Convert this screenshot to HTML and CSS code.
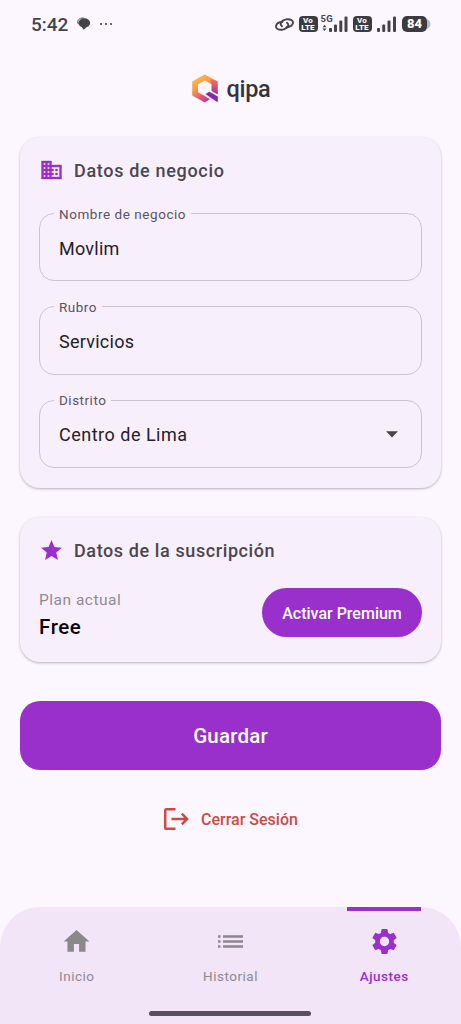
FILE: index.html
```html
<!DOCTYPE html>
<html lang="es">
<head>
<meta charset="utf-8">
<title>qipa</title>
<link rel="stylesheet" href="styles.css">
</head>
<body>
<div class="screen">
  <div class="status">
    <span class="clock">5:42</span>
    <svg class="chat" width="14" height="14" viewBox="0 0 14 14"><path d="M7 1.200C3.500.5.800 2.300.700 4.800c0 1 .3 1.600.7 2.200" fill="none" stroke="#45434a" stroke-width=".9"/><ellipse cx="7.300" cy="6" rx="5.900" ry="4.700" fill="#45434a"/><path d="M4.500 9.500l2.100 3.300 2.900-2.600z" fill="#45434a"/></svg>
    <svg class="dots" width="14" height="4" viewBox="0 0 14 4" fill="#45434a"><circle cx="2" cy="2" r="1.100"/><circle cx="7" cy="2" r="1.100"/><circle cx="12" cy="2" r="1.100"/></svg>
    <div class="indicators">
      <svg class="link" width="19" height="15" viewBox="0 0 19 15" fill="none" stroke="#45434a" stroke-width="1.900" stroke-linecap="round"><path d="M7 9.300C4.300 7.300 6 3.400 11 2.400C15.500 1.600 18.600 3.500 17.900 6.300C17.300 8.700 14.500 10 11.500 10.200"/><path d="M12 5.700C14.700 7.700 13 11.600 8 12.600C3.500 13.400.4 11.500 1.100 8.700C1.700 6.300 4.500 5 7.500 4.800"/></svg>
      <span class="volte"><span>Vo</span><span>LTE</span></span>
      <span class="mobile"><span class="gen">5G</span><svg width="26" height="16" viewBox="0 0 26 16" fill="#45434a"><path d="M2.500 8.800l2 2.400h-4zM2.500 15l-2-2.400h4z"/><rect x="7" y="12" width="3" height="4" rx="1"/><rect x="12" y="8.500" width="3" height="7.500" rx="1"/><rect x="17.300" y="4.500" width="3" height="11.500" rx="1"/><rect x="22.500" y="0.500" width="3" height="15.500" rx="1"/></svg></span>
      <span class="volte"><span>Vo</span><span>LTE</span></span>
      <svg class="bars" width="20" height="16" viewBox="0 0 20 16" fill="#45434a"><rect x="0" y="12" width="3" height="4" rx="1"/><rect x="5.200" y="8.500" width="3" height="7.500" rx="1"/><rect x="10.500" y="4.500" width="3" height="11.500" rx="1"/><rect x="16" y="0.500" width="3" height="15.500" rx="1"/></svg>
      <span class="battery">84</span><svg class="tip" width="4" height="10" viewBox="0 0 4 10"><path d="M0 0Q3.500 2 3.500 5T0 10z" fill="#bbb7bf"/></svg>
    </div>
  </div>

  <div class="brand">
    <svg width="28" height="30" viewBox="0 0 28 30">
      <defs>
        <linearGradient id="ring" x1=".1" y1="0" x2=".7" y2="1"><stop offset="0" stop-color="#ffc445"/><stop offset=".4" stop-color="#f79a4c"/><stop offset=".75" stop-color="#d9507c"/><stop offset="1" stop-color="#b02c98"/></linearGradient>
        <linearGradient id="side" x1="0" y1="0" x2="0" y2="1"><stop offset="0" stop-color="#f2784f"/><stop offset="1" stop-color="#a52fa0"/></linearGradient>
      </defs>
      <path fill="url(#ring)" d="M13.800.5L26.800 7.500L20.500 10.300L13.800 6.500L7 10.500V18.300L13 21.600L19 25.300L13.800 28.500L1.200 21.500V7.500z"/>
      <path fill="url(#side)" d="M20.500 10.300L19 5L26.800 7.500V20.500L20.500 17z"/>
      <path fill="#8526ae" d="M14.500 20L18.300 17.800L26.800 22.500V28.200L20 24z"/>
    </svg>
    <span class="brand-name">qipa</span>
  </div>

  <main class="content">
    <section class="card business">
      <h2 class="card-title"><svg width="25" height="24" viewBox="0 0 24 24" fill="#9930cb"><path d="M12 7V3H2v18h20V7H12zM6 19H4v-2h2v2zm0-4H4v-2h2v2zm0-4H4V9h2v2zm0-4H4V5h2v2zm4 12H8v-2h2v2zm0-4H8v-2h2v2zm0-4H8V9h2v2zm0-4H8V5h2v2zm10 12h-8v-2h2v-2h-2v-2h2v-2h-2V9h8v10zm-2-8h-2v2h2v-2zm0 4h-2v2h2v-2z" stroke="#9930cb" stroke-width=".4"/></svg><span class="t-business">Datos de negocio</span></h2>
      <fieldset class="field"><legend class="l-name">Nombre de negocio</legend><span class="v-name">Movlim</span></fieldset>
      <fieldset class="field"><legend class="l-line">Rubro</legend><span class="v-line">Servicios</span></fieldset>
      <fieldset class="field"><legend class="l-area">Distrito</legend><span class="v-area">Centro de Lima</span><svg width="12" height="7" viewBox="0 0 12 7"><path d="M0 .3h12L6 6.500z" fill="#49454f"/></svg></fieldset>
    </section>

    <section class="card plan">
      <h2 class="card-title"><svg width="25" height="25" viewBox="0 0 24 24" fill="#9930cb"><path d="M12 17.270L18.180 21l-1.640-7.030L22 9.240l-7.190-.61L12 2 9.190 8.630 2 9.240l5.460 4.730L5.820 21z"/></svg><span class="t-plan">Datos de la suscripción</span></h2>
      <div class="plan-row">
        <div class="plan-info"><span class="plan-label">Plan actual</span><strong class="plan-name">Free</strong></div>
        <button class="premium">Activar Premium</button>
      </div>
    </section>

    <button class="save">Guardar</button>
    <a class="logout"><svg width="26" height="24" viewBox="0 0 26 24" fill="none" stroke="#cb4a46" stroke-width="2.500"><path d="M12.500 2.200H3.500q-1.300 0-1.300 1.300v17q0 1.300 1.300 1.300h9M8.500 12h16M18.800 6.700l5.300 5.300-5.300 5.300"/></svg><span>Cerrar Sesión</span></a>
  </main>

  <nav class="nav">
    <a class="tab"><svg width="31" height="31" viewBox="0 0 24 24" fill="#8b888c"><path d="M10 20v-6h4v6h5v-8h3L12 3 2 12h3v8z"/></svg><span class="n-home">Inicio</span></a>
    <a class="tab"><svg width="31" height="31" viewBox="-.4 -.4 24.800 24.800" fill="#8b888c"><path d="M2 17h2v-2H2v2zm0-4h2v-2H2v2zm0-4h2V7H2v2zm4 4h16v-2H6v2zm0 4h16v-2H6v2zM6 7v2h16V7H6z"/></svg><span class="n-history">Historial</span></a>
    <a class="tab active"><svg width="31" height="31" viewBox="0 0 24 24" fill="#9930cb"><path d="M19.140 12.940c.04-.3.06-.61.06-.94 0-.32-.02-.64-.07-.94l2.030-1.580c.18-.14.23-.41.12-.61l-1.920-3.320c-.12-.22-.37-.29-.59-.22l-2.390.96c-.5-.38-1.030-.7-1.620-.94l-.36-2.540c-.04-.24-.24-.41-.48-.41h-3.840c-.24 0-.43.17-.47.41l-.36 2.540c-.59.24-1.130.57-1.620.94l-2.390-.96c-.22-.08-.47 0-.59.22L2.740 8.870c-.12.21-.08.47.12.61l2.030 1.580c-.05.3-.09.63-.09.94s.02.64.07.94l-2.030 1.580c-.18.14-.23.41-.12.61l1.920 3.320c.12.22.37.29.59.22l2.390-.96c.5.38 1.030.7 1.620.94l.36 2.540c.05.24.24.41.48.41h3.840c.24 0 .44-.17.47-.41l.36-2.540c.59-.24 1.130-.56 1.620-.94l2.390.96c.22.08.47 0 .59-.22l1.920-3.320c.12-.22.07-.47-.12-.61l-2.010-1.580zM12 15.600c-1.980 0-3.600-1.620-3.600-3.600s1.620-3.600 3.600-3.600 3.600 1.620 3.600 3.600-1.620 3.600-3.600 3.600z"/></svg><span class="n-settings">Ajustes</span></a>
    <span class="home-bar"></span>
  </nav>
</div>
</body>
</html>
```
FILE: styles.css
```css
* { box-sizing: border-box; }
body { margin: 0; font-family: Roboto, "Liberation Sans", sans-serif; color: #242029; }
.screen { width: 461px; height: 1024px; background: #fcf7ff; display: flex; flex-direction: column; overflow: hidden; }
h2, button { margin: 0; font: inherit; }
svg { display: block; flex: none; }

.status { height: 48px; display: flex; align-items: center; padding: 0 30px 0 31px; color: #45434a; }
.clock { font-size: 19px; font-weight: 500; width: 46px; }
.dots { margin-left: 8px; }
.indicators { margin-left: auto; display: flex; align-items: center; }
.link { margin-right: 5px; }
.volte { width: 19px; height: 16px; border-radius: 4px; background: #3d3b42; color: #fff; display: flex; flex-direction: column; align-items: center; justify-content: center; font-size: 8px; line-height: 7px; font-weight: 800; letter-spacing: .2px; }
.mobile { position: relative; margin: 0 5px 0 4px; }
.gen { position: absolute; left: -1px; top: -2px; font-size: 9.500px; line-height: 9px; font-weight: 700; letter-spacing: .2px; }
.bars { margin: 0 5px 0 5.500px; }
.battery { width: 25px; height: 16px; border-radius: 5px; background: #3d3b42; color: #fff; font-size: 13px; line-height: 16px; font-weight: 800; text-align: center; }

.brand { height: 89px; padding-top: 26px; display: flex; justify-content: center; gap: 8px; }
.brand-name { font-size: 23.500px; line-height: 31px; font-weight: 500; color: #38333a; letter-spacing: -.3px; }

.content { flex: 1; padding: 0 20px; display: flex; flex-direction: column; }
.card { background: #f7effc; border-radius: 20px; padding: 20px 19px; box-shadow: 0 1px 3px rgba(40, 20, 50, .2), 0 1px 2px rgba(40, 20, 50, .12); }
.business { height: 351px; display: flex; flex-direction: column; }
.card-title { display: flex; align-items: center; gap: 10px; height: 27px; flex: none; font-size: 18px; font-weight: 500; color: #4b464e; }
.business .card-title { height: 26px; margin-bottom: 22.500px; }
.field { flex: none; height: 75.800px; margin: 0 0 17.500px; min-width: 0; border: 1.500px solid #cdc3d1; border-radius: 15px; padding: 16px 23px 0 19px; display: flex; align-items: center; justify-content: space-between; font-size: 18px; }
.field legend { margin-left: -5px; padding: 0 5px; font-size: 13.500px; line-height: 16px; color: #5b5461; }

.plan { margin-top: 29px; height: 145px; }
.plan-row { margin-top: 24px; display: flex; justify-content: space-between; }
.plan-info { display: flex; flex-direction: column; padding-top: 1px; }
.plan-label { font-size: 15.500px; line-height: 23px; color: #908a94; letter-spacing: .5px; }
.plan-name { font-size: 20.500px; line-height: 30px; font-weight: 500; color: #08070a; letter-spacing: .6px; }
.premium { width: 160px; height: 49px; border: 0; padding: 2px 0 0; border-radius: 25px; background: #9930cb; color: #fff; font-size: 16px; font-weight: 500; }
.save { margin-top: 39px; height: 69px; flex: none; border: 0; border-radius: 20px; background: #9930cb; color: #fff; font-size: 20.500px; font-weight: 500; letter-spacing: .2px; }
.logout { margin-top: 37px; display: flex; justify-content: center; align-items: center; gap: 12px; color: #cb4a46; font-size: 16px; font-weight: 500; }

.nav { position: relative; height: 117px; flex: none; background: #f2e5f7; border-radius: 40px 40px 0 0; display: flex; color: #8f8995; }
.tab { flex: 1; display: flex; flex-direction: column; align-items: center; padding-top: 19px; gap: 11px; font-size: 13.500px; line-height: 16px; letter-spacing: .5px; }
.active { color: #9930cb; font-weight: 500; position: relative; }
.active::before { content: ""; position: absolute; top: 0; left: 40px; width: 74px; height: 4px; background: #9930cb; }
.home-bar { position: absolute; left: 149px; top: 104px; width: 162px; height: 5px; border-radius: 3px; background: #57505e; }

.t-business { letter-spacing: .68px; }
.t-plan { letter-spacing: .6px; }
.l-name { letter-spacing: .55px; }
.l-line, .l-area { letter-spacing: .5px; }
.v-name, .v-line { letter-spacing: .25px; }
.v-area { letter-spacing: .5px; }
```
